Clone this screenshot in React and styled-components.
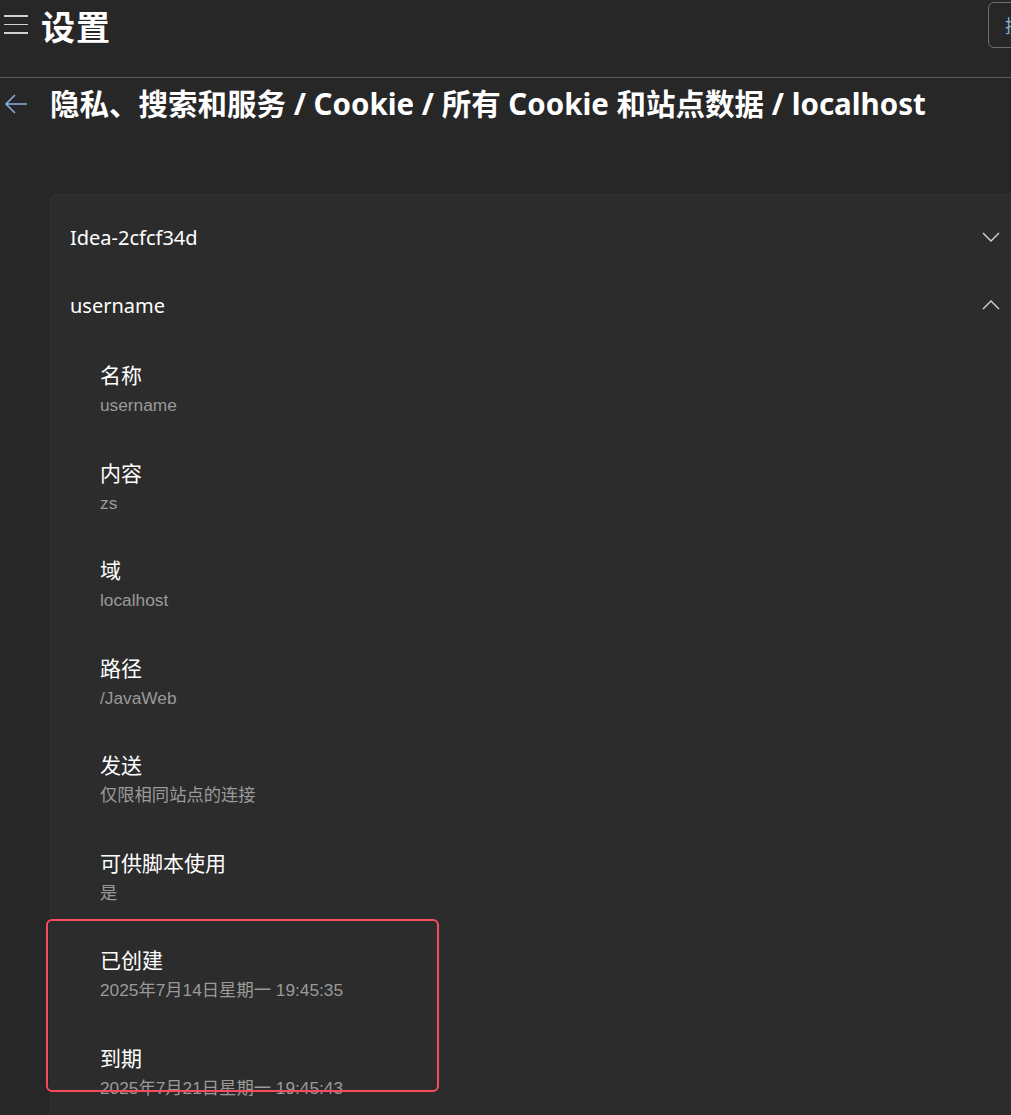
import styled, { createGlobalStyle } from 'styled-components';

const GlobalStyle = createGlobalStyle`
  html, body {
    margin: 0;
    padding: 0;
    background: #272727;
    overflow: hidden;
  }
  body {
    font-family: 'Segoe UI', 'Noto Sans', 'Noto Sans CJK SC', sans-serif;
    color: #ffffff;
  }
`;

const Page = styled.div`
  width: 1011px;
  height: 1115px;
  overflow: hidden;
  position: relative;
`;

const Header = styled.header`
  height: 78px;
  display: flex;
  align-items: center;
  border-bottom: 1px solid #5c5c5c;
  box-sizing: border-box;
  padding-bottom: 26px;
  position: relative;
`;

const MenuButton = styled.div`
  width: 24px;
  margin-left: 4px;
  display: flex;
  flex-direction: column;
  gap: 7px;
  margin-top: -2px;
  span {
    display: block;
    height: 1.5px;
    background: #d0d0d0;
  }
`;

const Title = styled.h1`
  margin: 0 0 0 13px;
  font-size: 34px;
  font-weight: 700;
  letter-spacing: 1px;
  font-family: 'Noto Sans CJK SC', sans-serif;
  line-height: 44px;
`;

const SearchBox = styled.div`
  position: absolute;
  left: 988px;
  top: 2px;
  width: 120px;
  height: 46px;
  border: 1px solid #6e6e6e;
  border-radius: 6px;
  box-sizing: border-box;
  display: flex;
  align-items: center;
  padding-left: 16px;
  color: #7fb6de;
  font-size: 18px;
  font-family: 'Noto Sans CJK SC', sans-serif;
  white-space: nowrap;
`;

const Breadcrumb = styled.div`
  display: flex;
  align-items: center;
  height: 52px;
`;

const BackArrow = styled.svg`
  width: 24px;
  height: 22px;
  margin-left: 4px;
  margin-right: 22px;
`;

const Crumbs = styled.h2`
  margin: 0;
  font-size: 29.5px;
  font-weight: 700;
  font-family: 'Noto Sans', 'Noto Sans CJK SC', sans-serif;
  white-space: nowrap;
  line-height: 40px;
`;

const Card = styled.section`
  margin: 62px 0 0 48px;
  width: 1000px;
  background: #2c2c2c;
  border-radius: 8px 0 0 0;
  border-left: 1px solid #242424;
  border-top: 1px solid #242424;
  padding: 10px 0 0 21px;
  box-sizing: border-box;
  min-height: 940px;
`;

const CookieRow = styled.div`
  height: 68px;
  display: flex;
  align-items: center;
  justify-content: space-between;
  padding-right: 48px;
  font-size: 20px;
  font-family: 'Noto Sans', 'Noto Sans CJK SC', sans-serif;
`;

const Chevron = styled.svg`
  width: 18px;
  height: 10px;
`;

const Details = styled.div`
  padding: 21px 0 0 30px;
  display: flex;
  flex-direction: column;
  gap: 41.5px;
`;

const Item = styled.div`
  display: flex;
  flex-direction: column;
  gap: 6px;
`;

const Label = styled.div`
  font-size: 21px;
  line-height: 28px;
  color: #ffffff;
  font-family: 'Noto Sans CJK SC', sans-serif;
`;

const Value = styled.div`
  font-size: 17.3px;
  line-height: 22px;
  color: #9a9a9a;
  font-family: 'Liberation Sans', 'Noto Sans CJK SC', sans-serif;
`;

const Highlight = styled.div`
  display: flex;
  flex-direction: column;
  gap: 41.5px;
  position: relative;
  &::before {
    content: '';
    position: absolute;
    left: -54px;
    top: -26px;
    width: 393px;
    height: 173px;
    border: 2px solid #f84c5e;
    border-radius: 6px;
    box-sizing: border-box;
    pointer-events: none;
  }
`;

const ChevronIcon = ({ up }) => (
  <Chevron viewBox="0 0 18 10" fill="none">
    <path
      d={up ? 'M1 9 L9 1 L17 9' : 'M1 1 L9 9 L17 1'}
      stroke="#d6d6d6"
      strokeWidth="1.4"
    />
  </Chevron>
);

const details = [
  { label: '名称', value: 'username' },
  { label: '内容', value: 'zs' },
  { label: '域', value: 'localhost' },
  { label: '路径', value: '/JavaWeb' },
  { label: '发送', value: '仅限相同站点的连接' },
  { label: '可供脚本使用', value: '是' },
];

const highlighted = [
  { label: '已创建', value: '2025年7月14日星期一 19:45:35' },
  { label: '到期', value: '2025年7月21日星期一 19:45:43' },
];

const App = () => {
  return (
    <Page>
      <GlobalStyle />
      <Header>
        <MenuButton>
          <span />
          <span />
          <span />
        </MenuButton>
        <Title>设置</Title>
        <SearchBox>搜索设置</SearchBox>
      </Header>

      <Breadcrumb>
        <BackArrow viewBox="0 0 24 22" fill="none">
          <path
            d="M23 11 H2 M11 2 L2 11 L11 20"
            stroke="#8aaee0"
            strokeWidth="1.5"
          />
        </BackArrow>
        <Crumbs>隐私、搜索和服务 / Cookie / 所有 Cookie 和站点数据 / localhost</Crumbs>
      </Breadcrumb>

      <Card>
        <CookieRow>
          <span>Idea-2cfcf34d</span>
          <ChevronIcon />
        </CookieRow>
        <CookieRow>
          <span>username</span>
          <ChevronIcon up />
        </CookieRow>
        <Details>
          {details.map((d) => (
            <Item key={d.label}>
              <Label>{d.label}</Label>
              <Value>{d.value}</Value>
            </Item>
          ))}
          <Highlight>
            {highlighted.map((d) => (
              <Item key={d.label}>
                <Label>{d.label}</Label>
                <Value>{d.value}</Value>
              </Item>
            ))}
          </Highlight>
        </Details>
      </Card>
    </Page>
  );
};

export default App;
